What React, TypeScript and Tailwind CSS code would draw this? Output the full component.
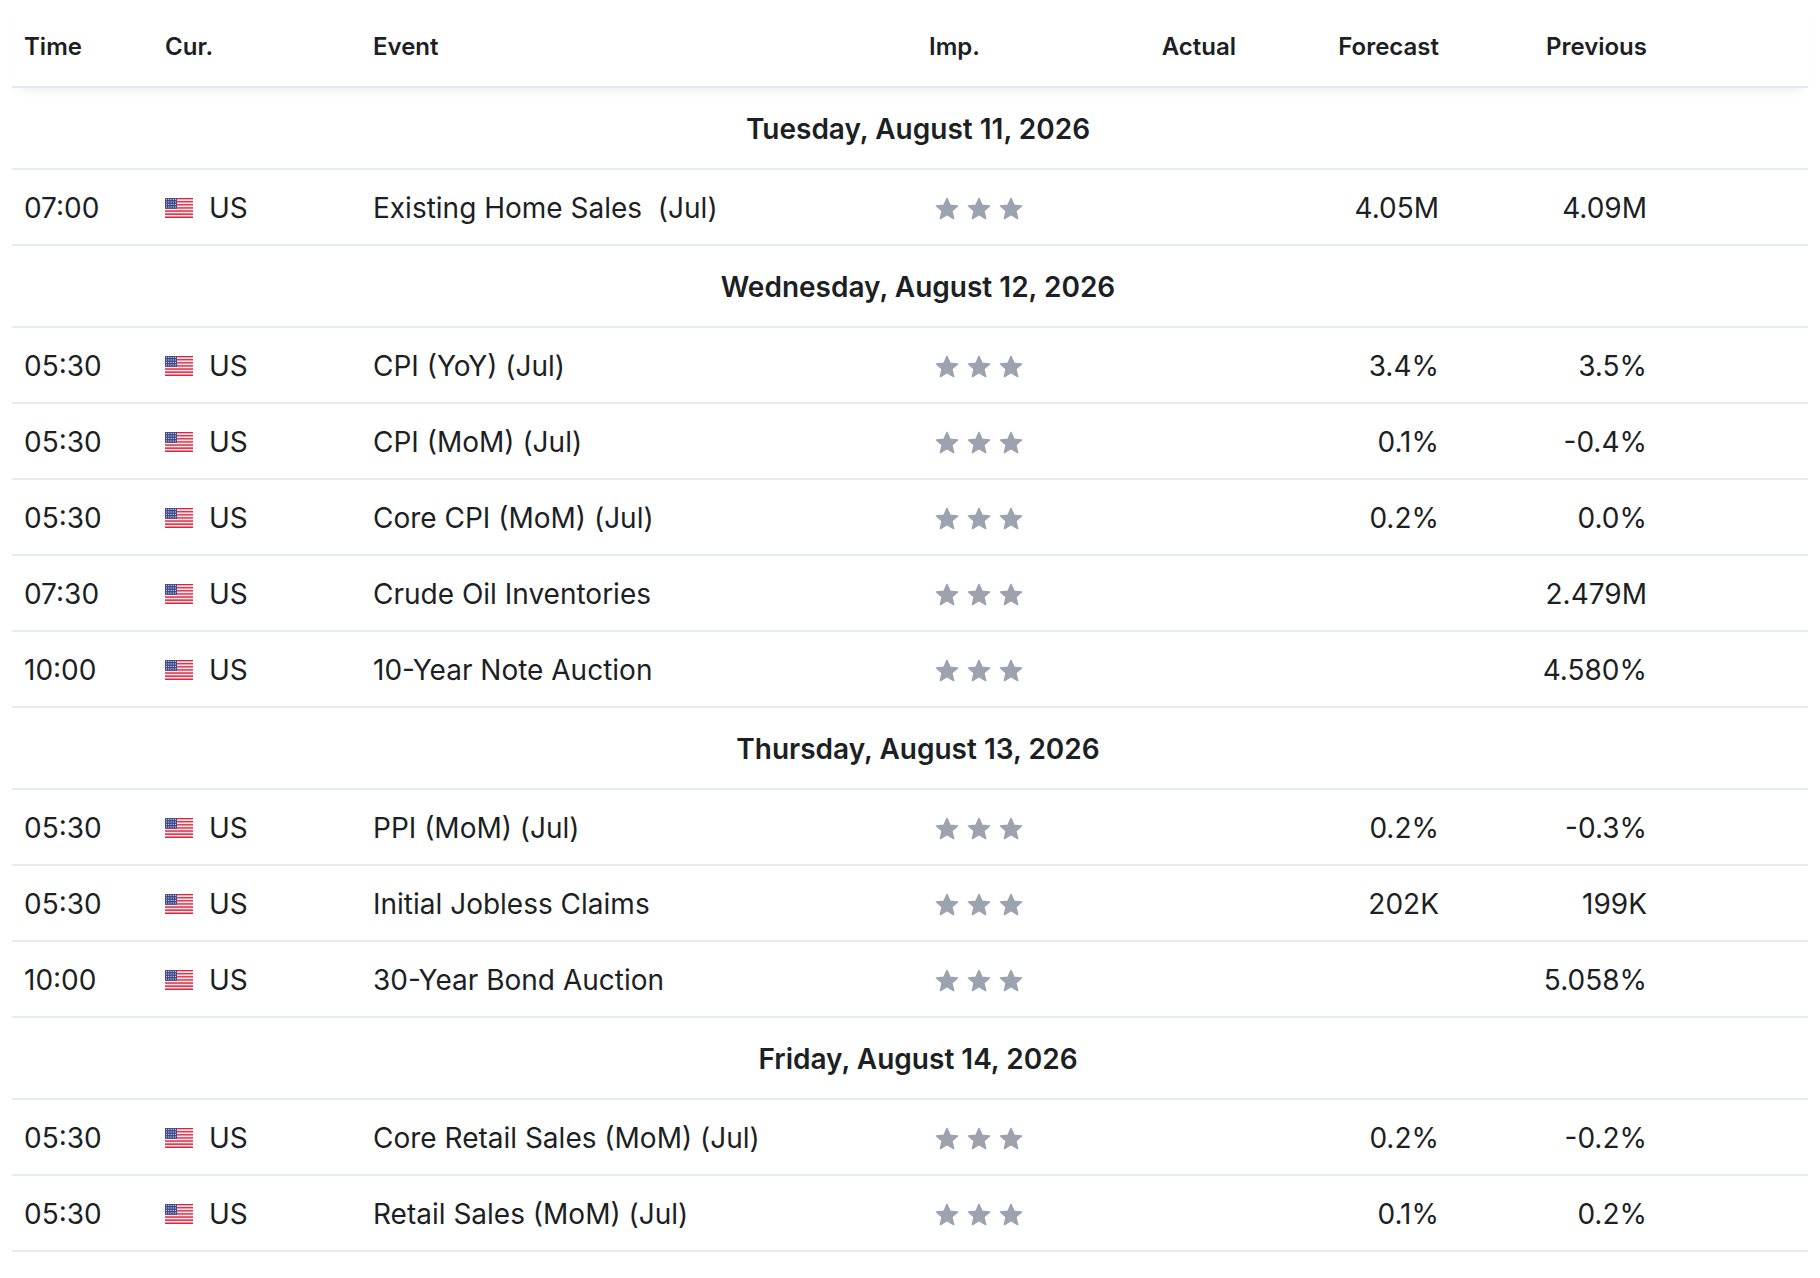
import React from "react";

type Row = {
    time: string;
    event: string;
    forecast?: string;
    previous?: string;
};

type Day = {
    date: string;
    rows: Row[];
};

const days: Day[] = [
    {
        date: "Tuesday, August 11, 2026",
        rows: [{ time: "07:00", event: "Existing Home Sales\u00a0 (Jul)", forecast: "4.05M", previous: "4.09M" }],
    },
    {
        date: "Wednesday, August 12, 2026",
        rows: [
            { time: "05:30", event: "CPI (YoY) (Jul)", forecast: "3.4%", previous: "3.5%" },
            { time: "05:30", event: "CPI (MoM) (Jul)", forecast: "0.1%", previous: "-0.4%" },
            { time: "05:30", event: "Core CPI (MoM) (Jul)", forecast: "0.2%", previous: "0.0%" },
            { time: "07:30", event: "Crude Oil Inventories", previous: "2.479M" },
            { time: "10:00", event: "10-Year Note Auction", previous: "4.580%" },
        ],
    },
    {
        date: "Thursday, August 13, 2026",
        rows: [
            { time: "05:30", event: "PPI (MoM) (Jul)", forecast: "0.2%", previous: "-0.3%" },
            { time: "05:30", event: "Initial Jobless Claims", forecast: "202K", previous: "199K" },
            { time: "10:00", event: "30-Year Bond Auction", previous: "5.058%" },
        ],
    },
    {
        date: "Friday, August 14, 2026",
        rows: [
            { time: "05:30", event: "Core Retail Sales (MoM) (Jul)", forecast: "0.2%", previous: "-0.2%" },
            { time: "05:30", event: "Retail Sales (MoM) (Jul)", forecast: "0.1%", previous: "0.2%" },
        ],
    },
];

const cols = "grid grid-cols-[141px_208px_556px_128px_203px_203px_208px_1fr]";

const UsFlag: React.FC = () => (
    <svg width="28" height="20" viewBox="0 0 28 20" className="shrink-0">
        {Array.from({ length: 13 }).map((_, i) => (
            <rect key={i} x="0" y={(i * 20) / 13} width="28" height={20 / 13 + 0.02} fill={i % 2 === 0 ? "#d7263d" : "#fbe3e6"} />
        ))}
        <rect x="0" y="0" width="12" height={(20 / 13) * 7} fill="#3f4a8a" />
        {Array.from({ length: 4 }).map((_, r) =>
            Array.from({ length: 5 }).map((_, c) => (
                <circle key={`${r}-${c}`} cx={1.4 + c * 2.3} cy={1.4 + r * 2.5} r="0.55" fill="#d9dcf0" />
            ))
        )}
    </svg>
);

const Star: React.FC = () => (
    <svg width="24" height="23" viewBox="0 0 24 23" className="shrink-0">
        <polygon
            points="12,1.5 15,8.4 22.5,9 16.8,14 18.6,21.5 12,17.6 5.4,21.5 7.2,14 1.5,9 9,8.4"
            fill="#9ca3af"
            stroke="#9ca3af"
            strokeWidth="1.6"
            strokeLinejoin="round"
        />
    </svg>
);

const Stars: React.FC = () => (
    <div className="flex items-center gap-2 ml-[6px]">
        <Star />
        <Star />
        <Star />
    </div>
);

const App: React.FC = () => (
    <div className="min-h-screen bg-white px-3 text-[#1c1f24]" style={{ fontFamily: "Inter, 'Noto Sans', sans-serif" }}>
        <div className={`${cols} h-[88px] pt-[8px] items-center border-b-2 border-[#e3e8f0] shadow-[0_8px_10px_-6px_rgba(0,0,0,0.07)] text-[24px] font-semibold`}>
            <div className="px-3">Time</div>
            <div className="px-3">Cur.</div>
            <div className="px-3">Event</div>
            <div className="px-3">Imp.</div>
            <div className="px-3 text-right">Actual</div>
            <div className="px-3 text-right">Forecast</div>
            <div className="px-3 text-right">Previous</div>
            <div />
        </div>

        {days.map((day) => (
            <div key={day.date}>
                <div className="h-[82px] pt-[2px] flex items-center justify-center pl-4 border-b-2 border-[#e6eaf1] text-[28px] font-semibold">
                    {day.date}
                </div>
                {day.rows.map((row, i) => (
                    <div key={i} className={`${cols} h-[76px] pt-[2px] items-center border-b-2 border-[#e6eaf1] text-[28px]`}>
                        <div className="px-3">{row.time}</div>
                        <div className="px-3 flex items-center gap-4">
                            <UsFlag />
                            <span>US</span>
                        </div>
                        <div className="px-3 whitespace-nowrap">{row.event}</div>
                        <div className="px-3">
                            <Stars />
                        </div>
                        <div className="px-3 text-right"></div>
                        <div className="px-3 text-right">{row.forecast}</div>
                        <div className="px-3 text-right">{row.previous}</div>
                        <div />
                    </div>
                ))}
            </div>
        ))}
    </div>
);

export default App;
